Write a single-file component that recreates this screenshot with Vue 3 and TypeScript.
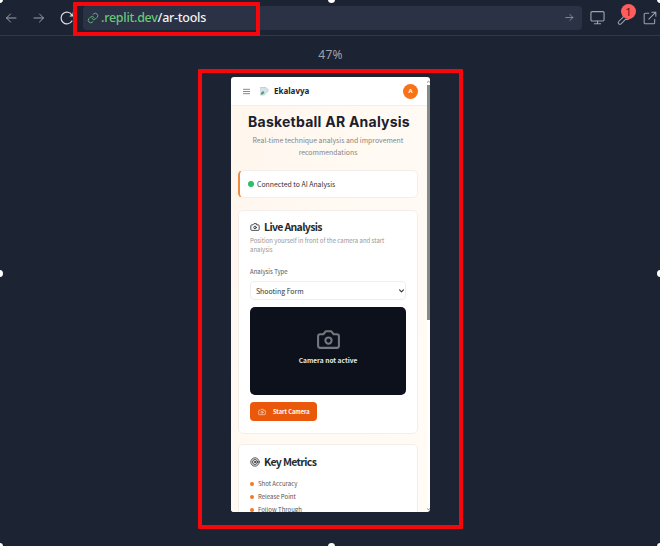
<script setup lang="ts">
const metrics: string[] = ['Shot Accuracy', 'Release Point', 'Follow Through']
</script>

<template>
  <main class="screen">
    <header class="toolbar">
      <svg class="nav back" viewBox="0 0 24 24"><path d="M22 12H3M11 4l-8 8 8 8" /></svg>
      <svg class="nav forward" viewBox="0 0 24 24"><path d="M2 12h19M13 4l8 8-8 8" /></svg>
      <svg class="nav reload" viewBox="0 0 24 24"><path d="M20.500 17A10 10 0 1 1 20.500 7M22.500 3v5.500h-5" /></svg>
      <div class="address">
        <svg class="link" viewBox="0 0 24 24"><path d="M10 13a5 5 0 0 0 7.500.500l3-3a5 5 0 0 0-7-7L11.700 5.200M14 11a5 5 0 0 0-7.500-.500l-3 3a5 5 0 0 0 7 7l1.800-1.700" /></svg>
        <span class="url"><span class="host">.replit.dev</span>/ar-tools</span>
        <svg class="go" viewBox="0 0 24 24"><path d="M2 12h19M13 4l8 8-8 8" /></svg>
      </div>
      <svg class="tool monitor" viewBox="0 0 24 24"><rect x="1.500" y="2.500" width="21" height="15" rx="2" /><path d="M12 17.500v4M7 22h10" /></svg>
      <span class="wrench">
        <svg class="tool" viewBox="0 0 24 24"><path d="M14 6a5 5 0 0 1 6-3l-3 3 1 3 3 1 2-3a6 6 0 0 1-8 7l-8 8a2.500 2.500 0 0 1-4-4l8-8a6 6 0 0 1 3-8" /></svg>
        <b class="count">1</b>
      </span>
      <svg class="tool external" viewBox="0 0 24 24"><path d="M10 4H4a2 2 0 0 0-2 2v14a2 2 0 0 0 2 2h14a2 2 0 0 0 2-2v-6M15 2h7v7M22 2L10 14" /></svg>
    </header>

    <p class="zoom">47%</p>

    <section class="phone">
      <div class="appbar">
        <svg class="menu" viewBox="0 0 8 8"><path d="M.5 1.500h7M.5 4h7M.5 6.500h7" /></svg>
        <svg class="broken" viewBox="0 0 9 9"><path d="M.5.5h5.500l2 2v5.500H.5z" fill="#d3e2ee" stroke="#a7b3ba" /><path d="M1 7.500V6l2-2 1.500 1.500-2 2z" fill="#46a45c" /><path d="M4 9l5-5v5z" fill="#fff" /></svg>
        <strong class="brand">Ekalavya</strong>
        <span class="avatar">A</span>
      </div>
      <div class="content">
        <h1><span>Basketball AR Analysis</span></h1>
        <p class="subtitle"><span>Real-time technique analysis and improvement</span><br /><span>recommendations</span></p>

        <div class="status"><i></i><span>Connected to AI Analysis</span></div>

        <article class="card live">
          <h2>
            <svg viewBox="0 0 24 24"><path d="M14.500 4h-5L7 7H4a2 2 0 0 0-2 2v9a2 2 0 0 0 2 2h16a2 2 0 0 0 2-2V9a2 2 0 0 0-2-2h-3z" /><circle cx="12" cy="13" r="3" /></svg>
            <span>Live Analysis</span>
          </h2>
          <p class="desc">Position yourself in front of the camera and start<br />analysis</p>
          <p class="label">Analysis Type</p>
          <div class="select"><span>Shooting Form</span><svg viewBox="0 0 6 4"><path d="M.7.7L3 3 5.300.7" /></svg></div>
          <div class="video">
            <svg viewBox="0 0 24 24"><path d="M14.500 4h-5L7 7H4a2 2 0 0 0-2 2v9a2 2 0 0 0 2 2h16a2 2 0 0 0 2-2V9a2 2 0 0 0-2-2h-3z" /><circle cx="12" cy="13" r="3" /></svg>
            <span>Camera not active</span>
          </div>
          <button class="start">
            <svg viewBox="0 0 24 24"><path d="M14.500 4h-5L7 7H4a2 2 0 0 0-2 2v9a2 2 0 0 0 2 2h16a2 2 0 0 0 2-2V9a2 2 0 0 0-2-2h-3z" /><circle cx="12" cy="13" r="3" /></svg>
            <span>Start Camera</span>
          </button>
        </article>

        <article class="card metrics">
          <h2>
            <svg viewBox="0 0 24 24"><circle cx="12" cy="12" r="10" /><circle cx="12" cy="12" r="6" /><circle cx="12" cy="12" r="2" /></svg>
            <span>Key Metrics</span>
          </h2>
          <ul>
            <li v-for="metric in metrics" :key="metric"><i></i><span>{{ metric }}</span></li>
          </ul>
        </article>
      </div>
      <div class="scrollbar"></div>
      <svg class="arrow up" viewBox="0 0 4 3"><path d="M0 3l2-2 2 2" /></svg>
      <svg class="arrow down" viewBox="0 0 4 3"><path d="M0 0l2 2 2-2" /></svg>
    </section>

    <div class="mark mark-url"></div>
    <div class="mark mark-phone"></div>
    <i class="handle nw"></i><i class="handle n"></i><i class="handle ne"></i>
    <i class="handle w"></i><i class="handle e"></i>
    <i class="handle sw"></i><i class="handle s"></i><i class="handle se"></i>
  </main>
</template>

<style>
body { background: #1c2333; }
</style>

<style scoped>
* { box-sizing: border-box; }
.screen { position: relative; width: 660px; height: 546px; overflow: hidden; background: #1c2333; font-family: "Noto Sans CJK SC", "Noto Sans", sans-serif; }
h1, h2, p, ul { margin: 0; padding: 0; font-weight: 400; }
span { white-space: nowrap; }
svg { display: block; flex: none; fill: none; stroke: currentColor; stroke-width: 2; stroke-linecap: round; stroke-linejoin: round; }
.toolbar { display: flex; align-items: center; height: 36px; border-bottom: 1px solid #30384a; color: #9da2ad; }
.nav { width: 12px; height: 12px; }
.back { margin-left: 5px; }
.forward { margin-left: 16px; }
.reload { width: 14px; height: 14px; margin-left: 15px; color: #e0e2e6; }
.address { display: flex; align-items: center; width: 499px; height: 24px; margin-left: 9px; padding: 0 8px 0 4px; border-radius: 4px; background: #2b3245; }
.link { width: 12px; height: 12px; color: #56b66b; }
.url { margin-left: 2px; font: 500 12.500px/20px "Noto Sans", sans-serif; letter-spacing: -.27px; color: #f2f3f5; }
.host { color: #68c779; }
.go { width: 9px; height: 9px; margin-left: auto; }
.tool { width: 15px; height: 15px; stroke-width: 1.800; }
.monitor { margin-left: 8px; }
.wrench { position: relative; margin-left: 12px; }
.wrench .tool { width: 14px; height: 14px; }
.count { position: absolute; top: -7px; left: 4px; width: 15px; height: 15px; border-radius: 50%; background: #ff5d5d; color: #42191f; font: 400 11px/15px "Noto Sans", sans-serif; text-align: center; }
.external { width: 14px; height: 14px; margin-left: 12px; }
.zoom { height: 41px; padding: 10px 0 0 1px; color: #9da2ad; font: 400 12px/18px "Noto Sans", sans-serif; letter-spacing: .2px; text-align: center; }
.phone { position: relative; width: 199px; height: 435px; margin-left: 231px; overflow: hidden; border-radius: 3px; background: #fff; color: #333; }
.appbar { display: flex; align-items: center; height: 28px; padding: 0 12px; }
.menu { width: 7px; height: 7px; stroke-width: 1; color: #777; }
.broken { width: 9px; height: 9px; margin-left: 10px; stroke: none; stroke-width: .5; }
.brand { margin-left: 5px; color: #20242d; font: 700 8px/12px "Noto Sans", sans-serif; }
.avatar { width: 15px; height: 15px; margin-left: auto; border-radius: 50%; background: #f97316; color: #fff; font: 700 6px/15px "Noto Sans", sans-serif; text-align: center; }
.content { width: 196px; height: 407px; padding: 6px 9px 0 7px; border-top: 1px solid #f4eee8; background: linear-gradient(110deg, #fff6ed, #fffaf3 45%, #fffbf5); }
h1 { display: flex; justify-content: center; height: 20px; padding-left: 2px; color: #1a202c; font: 700 14px/20px Inter, sans-serif; letter-spacing: .24px; }
.subtitle { margin-top: 2px; color: #858585; font-size: 6.880px; line-height: 12px; text-align: center; }
.status { display: flex; align-items: center; height: 28px; margin-top: 12px; padding-left: 8px; border: 1px solid #f4eee9; border-left: 2px solid #ef8a45; border-radius: 5px; background: #fff; font-size: 6.880px; }
.status i { width: 6px; height: 6px; margin-right: 3px; border-radius: 50%; background: #2dbe68; }
.card { border: 1px solid #f3eee9; border-radius: 5px; background: #fff; }
.live { height: 224px; margin-top: 12px; padding: 7px 11px; }
h2 { display: flex; align-items: center; height: 18px; color: #252a30; font-size: 10.500px; font-weight: 700; line-height: 18px; letter-spacing: -.65px; }
h2 svg { width: 10px; height: 10px; margin-right: 4px; }
.desc { color: #969696; font-size: 6px; line-height: 9px; white-space: nowrap; }
.label { margin-top: 13px; color: #555; font-size: 6px; line-height: 10px; }
.select { display: flex; align-items: center; justify-content: space-between; height: 19px; margin-top: 4px; padding: 0 1px 0 5px; border: 1px solid #eee; border-radius: 4px; font-size: 6.900px; }
.select svg { width: 5px; height: 4px; stroke-width: 1.300; }
.video { display: flex; flex-direction: column; align-items: center; height: 88px; margin-top: 7px; padding-top: 20px; border-radius: 5px; background: #0d111b; color: #e7e8ea; font-size: 6.600px; font-weight: 700; line-height: 12px; }
.video svg { width: 25px; height: 25px; color: #73777e; }
.video span { margin-top: 2px; }
.start { display: flex; align-items: center; width: 67px; height: 19px; margin-top: 7px; padding: 0 8px; border: 0; border-radius: 4px; background: #ea580c; color: #fff; font: 700 5.700px/12px "Noto Sans CJK SC", sans-serif; }
.start svg { width: 8px; height: 8px; margin-right: 7px; color: #ffe1cd; }
.metrics { height: 90px; margin-top: 10px; padding: 8px 11px; }
ul { margin-top: 6px; list-style: none; }
li { display: flex; align-items: center; height: 13px; color: #555; font-size: 6px; line-height: 13px; }
li i { width: 4px; height: 4px; margin-right: 4px; border-radius: 50%; background: #f37729; }
.scrollbar { position: absolute; top: 8px; right: 0; width: 3px; height: 235px; background: #858a87; }
.arrow { position: absolute; right: 0; width: 3px; height: 3px; stroke-width: 1; color: #666; }
.up { top: 3px; }
.down { bottom: 1px; }
.mark { position: absolute; border: 4px solid #f5070b; border-radius: 1px; }
.mark-url { left: 73px; top: 2px; width: 187px; height: 34px; }
.mark-phone { left: 198px; top: 69px; width: 265px; height: 460px; }
.handle { position: absolute; width: 7px; height: 7px; border-radius: 50%; background: #fff; }
.nw, .n, .ne { top: -4px; }
.w, .e { top: 270px; }
.sw, .s, .se { bottom: -4px; }
.nw, .w, .sw { left: -4px; }
.n, .s { left: 328px; }
.ne, .e, .se { right: -4px; }
</style>
